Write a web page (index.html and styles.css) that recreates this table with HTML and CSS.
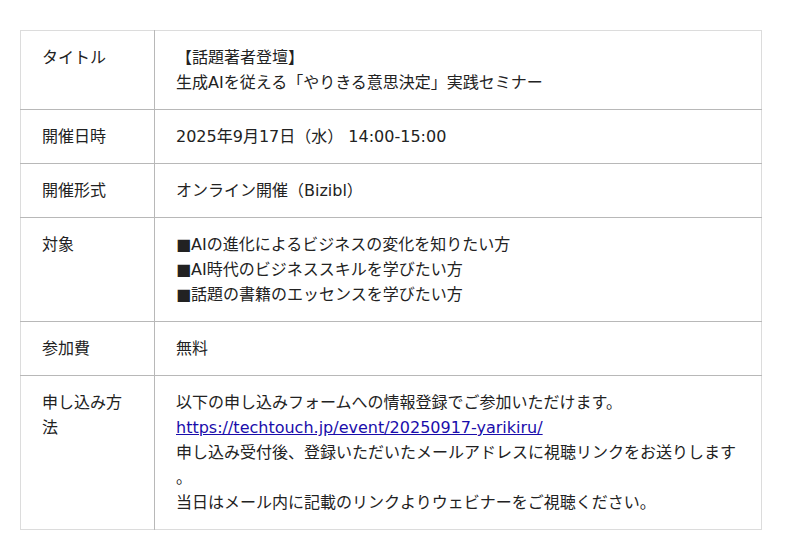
FILE: index.html
```html
<!DOCTYPE html>
<html lang="ja">
<head>
<meta charset="utf-8">
<link rel="stylesheet" href="styles.css">
</head>
<body>
<table class="info">
  <tr>
    <th>タイトル</th>
    <td>【話題著者登壇】<br>生成AIを従える「やりきる意思決定」実践セミナー</td>
  </tr>
  <tr>
    <th>開催日時</th>
    <td>2025年9月17日（水） 14:00-15:00</td>
  </tr>
  <tr>
    <th>開催形式</th>
    <td>オンライン開催（Bizibl）</td>
  </tr>
  <tr>
    <th>対象</th>
    <td>■AIの進化によるビジネスの変化を知りたい方<br>■AI時代のビジネススキルを学びたい方<br>■話題の書籍のエッセンスを学びたい方</td>
  </tr>
  <tr>
    <th>参加費</th>
    <td>無料</td>
  </tr>
  <tr>
    <th>申し込み方法</th>
    <td>以下の申し込みフォームへの情報登録でご参加いただけます。<br><a href="#">https://techtouch.jp/event/20250917-yarikiru/</a><br>申し込み受付後、登録いただいたメールアドレスに視聴リンクをお送りします<br>。<br>当日はメール内に記載のリンクよりウェビナーをご視聴ください。</td>
  </tr>
</table>
</body>
</html>
```
FILE: styles.css
```css
html, body {
  margin: 0;
  padding: 0;
  background: #fff;
}
body {
  padding: 30px 20px;
  font-family: "DejaVu Sans", "Noto Sans CJK JP", sans-serif;
  font-size: 16px;
  line-height: 25px;
  color: #222;
}
.info {
  width: 742px;
  border-collapse: collapse;
  border: 1px solid #dcdcdc;
}
.info th,
.info td {
  padding: 14px 21px;
  text-align: left;
  vertical-align: top;
  font-weight: normal;
  border-bottom: 1px solid #b8b8b8;
}
.info tr:last-child th,
.info tr:last-child td {
  border-bottom: none;
}
.info th {
  width: 91px;
  border-right: 1px solid #b8b8b8;
}
.info a {
  color: #1a0dab;
  text-decoration: underline;
}
```
